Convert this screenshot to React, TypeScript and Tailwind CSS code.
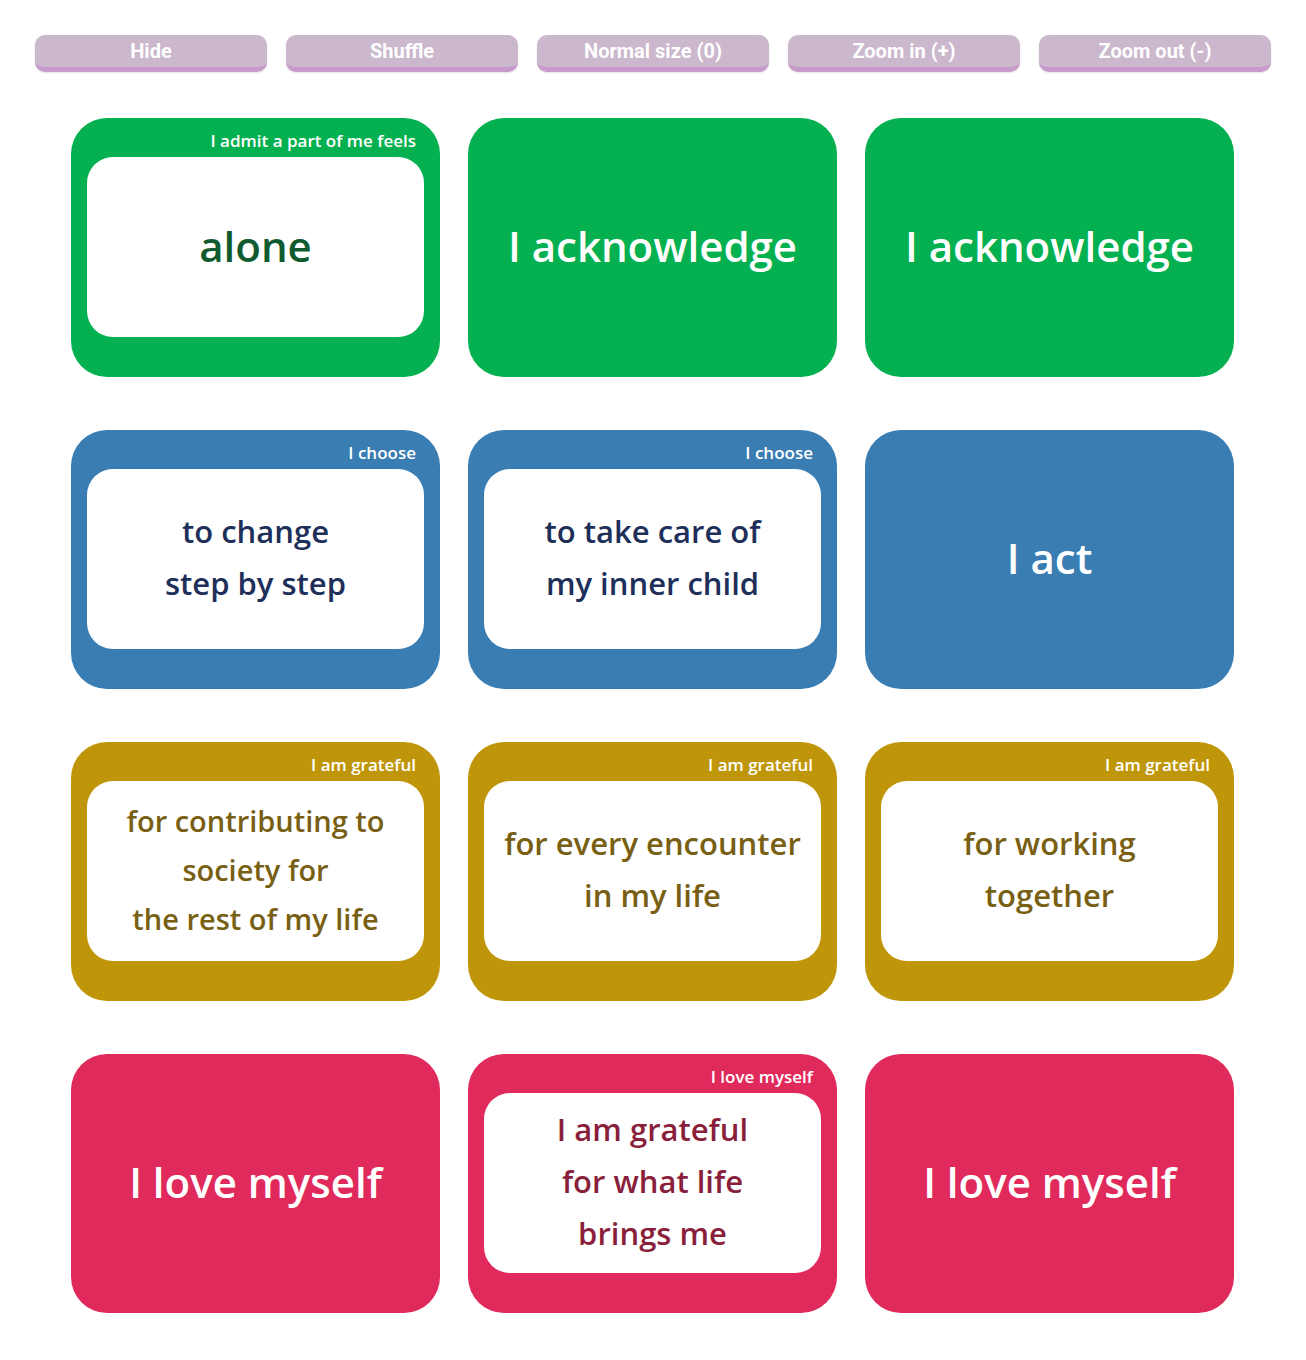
import React from "react";

type Card = {
  color: string;
  ink: string;
  label?: string;
  lines: string[];
  text?: string;
};

const buttons = ["Hide", "Shuffle", "Normal size (0)", "Zoom in (+)", "Zoom out (-)"];

const green = { color: "bg-[#04b04f]", ink: "text-[#0f5a2e]" };
const blue = { color: "bg-[#397db3]", ink: "text-[#1e2f5a]" };
const gold = { color: "bg-[#bf9609]", ink: "text-[#785f14]" };
const pink = { color: "bg-[#e12a5c]", ink: "text-[#8a1f3b]" };

const cards: Card[] = [
  { ...green, label: "I admit a part of me feels", lines: ["alone"] },
  { ...green, lines: ["I acknowledge"] },
  { ...green, lines: ["I acknowledge"] },
  { ...blue, label: "I choose", lines: ["to change", "step by step"] },
  { ...blue, label: "I choose", lines: ["to take care of", "my inner child"] },
  { ...blue, lines: ["I act"] },
  {
    ...gold,
    label: "I am grateful",
    lines: ["for contributing to", "society for", "the rest of my life"],
    text: "text-[29px] leading-[49px]",
  },
  { ...gold, label: "I am grateful", lines: ["for every encounter", "in my life"] },
  { ...gold, label: "I am grateful", lines: ["for working", "together"] },
  { ...pink, lines: ["I love myself"] },
  { ...pink, label: "I love myself", lines: ["I am grateful", "for what life", "brings me"] },
  { ...pink, lines: ["I love myself"] },
];

function AffirmationCard({ card }: { card: Card }) {
  if (!card.label) {
    return (
      <div
        className={`${card.color} flex h-[259px] items-center justify-center rounded-[36px] pb-[5px] text-[42px] font-semibold text-white`}
      >
        {card.lines.join(" ")}
      </div>
    );
  }
  return (
    <div className={`${card.color} flex h-[259px] flex-col rounded-[36px] px-4 pb-10 pt-[9px]`}>
      <div className="h-[30px] pr-2 text-right text-[17px] font-semibold leading-[28px] text-white">
        {card.label}
      </div>
      <div
        className={`flex flex-1 flex-col items-center justify-center rounded-[26px] bg-white pb-[4px] text-center font-semibold ${card.ink} ${
          card.lines.length === 1 ? "text-[42px]" : card.text ?? "text-[31px] leading-[52px]"
        }`}
      >
        {card.lines.map((line) => (
          <div key={line}>{line}</div>
        ))}
      </div>
    </div>
  );
}

export default function App() {
  return (
    <div className="min-h-[1360px] bg-white px-[35px] pt-[35px] font-['Open_Sans',sans-serif]">
      <div className="grid grid-cols-5 gap-x-[19px]">
        {buttons.map((b) => (
          <button
            key={b}
            className="h-[37px] rounded-[10px] border-b-[5px] border-[#c89acb] bg-[#cbb8cd] pb-[1px] font-['Roboto',sans-serif] text-[20px] font-bold leading-none text-white shadow-[0_1px_2px_rgba(0,0,0,0.12)]"
          >
            {b}
          </button>
        ))}
      </div>
      <div className="ml-[36px] mt-[46px] grid w-[1163px] grid-cols-3 gap-x-[28px] gap-y-[53px]">
        {cards.map((card, i) => (
          <AffirmationCard key={i} card={card} />
        ))}
      </div>
    </div>
  );
}
